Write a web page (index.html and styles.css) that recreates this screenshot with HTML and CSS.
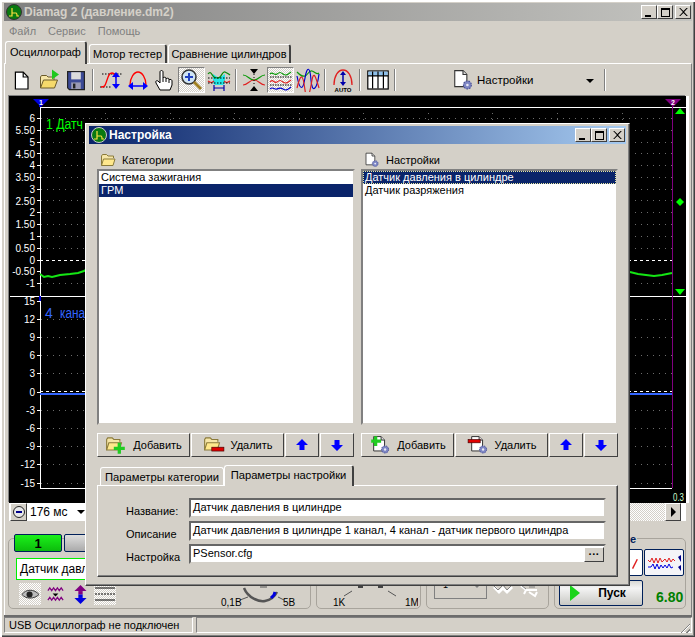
FILE: index.html
```html
<!DOCTYPE html>
<html>
<head>
    <title>Diamag 2 (давление.dm2)</title>
    <link rel="stylesheet" href="styles.css">
</head>
<body>
<svg class="defs" width="0" height="0">
    <symbol id="folder" viewBox="0 0 16 16">
        <path d="M1.5 13.5V4l1-1.5h4L8 4h5.5v2" fill="#f6e6a8" stroke="#8a7a3a"/>
        <path d="M1.5 13.5L3.5 7h11.5l-2 6.500z" fill="#ffe88c" stroke="#8a7a3a"/>
    </symbol>
    <symbol id="gearpage" viewBox="0 0 20 20">
        <path d="M2.500 1.500H10l3.500 3.500V16H2.500z" fill="#fff" stroke="#333"/>
        <path d="M10 1.500V5h3.500" fill="#ddd" stroke="#333"/>
        <circle cx="14" cy="14.500" r="3.600" fill="#7d86c4" stroke="#4c5296" stroke-width="1" stroke-dasharray="1.500 1"/>
        <circle cx="14" cy="14.500" r="1.200" fill="#e8e8f4"/>
    </symbol>
    <symbol id="arrowup" viewBox="0 0 14 14">
        <path d="M7 1l6 6H9.500v5h-5V7H1z" fill="#0000ff"/>
    </symbol>
    <symbol id="arrowdown" viewBox="0 0 14 14">
        <path d="M7 13l6-6H9.500V2h-5v5H1z" fill="#0000ff"/>
    </symbol>
</svg>

<div class="window">
    <div class="titlebar">
        <svg class="appicon" viewBox="0 0 16 16"><circle cx="8" cy="8" r="7.500" fill="#0a7a10" stroke="#333" stroke-width="1"/><path d="M3 12h3V4m0 5h4c1 0 1 1 1 3h2" fill="none" stroke="#ffe040" stroke-width="1.200"/></svg>
        <span class="title-text">Diamag 2 (давление.dm2)</span>
        <div class="capbtns">
            <span class="capbtn"><i class="cap-min"></i></span>
            <span class="capbtn"><i class="cap-max"></i></span>
            <span class="capbtn gap"><svg viewBox="0 0 10 9"><path d="M1 0l3.500 3.500L8 0h1.500L5.300 4.500 9.500 9H8L4.500 5.500 1 9H-.3l4.200-4.500L-.3 0z" transform="translate(.4 0)"/></svg></span>
        </div>
    </div>
    <div class="menubar">
        <span>Файл</span><span>Сервис</span><span>Помощь</span>
    </div>
    <div class="tabs">
        <span class="tab active">Осциллограф</span>
        <span class="tab motor">Мотор тестер</span>
        <span class="tab cmp">Сравнение цилиндров</span>
    </div>

    <div class="page">
        <div class="toolbar">
            <span class="tool"><svg viewBox="0 0 20 20"><path d="M4.500 3.500H11l4 4v10H4.500z" fill="#fff" stroke="#000"/><path d="M11 3.500v4h4" fill="none" stroke="#000"/></svg></span>
            <span class="tool"><svg viewBox="0 0 24 24"><path d="M3.500 20V9l1-1.500h5L11 9h6v3" fill="#f6e6a8" stroke="#6a5a2a"/><path d="M3.500 20l3-8h14l-3 8z" fill="#f5d96b" stroke="#6a5a2a"/><path d="M15 1.500l7 5-7 5z" fill="#1ec81e"/></svg></span>
            <span class="tool"><svg viewBox="0 0 20 20"><path d="M3 3h14v15H4.500L3 16.500z" fill="#3c4a96" stroke="#222"/><rect x="6" y="3.500" width="8" height="6" fill="#dcdcdc"/><rect x="6" y="12" width="8" height="5.500" fill="#9a9ab4"/><rect x="7.500" y="13" width="2" height="4" fill="#222"/></svg></span>
            <span class="sep"></span>
            <span class="tool"><svg viewBox="0 0 24 24"><path d="M3 6h20M1 19h11" stroke="#000" stroke-dasharray="1.500 1.500"/><path d="M2 19c4 0 4-1 6-7s3-7 5-7 3 2 4 5" fill="none" stroke="#f00" stroke-width="1.300"/><path d="M17 7v10" stroke="#00f" stroke-width="1.500"/><path d="M17 4l4 5h-8zM17 21l4-5h-8z" fill="#00f"/></svg></span>
            <span class="tool"><svg viewBox="0 0 24 24"><path d="M4 17c0-7 4-13 8-13s8 6 8 13" fill="none" stroke="#f00" stroke-width="1.300"/><path d="M5 18h14" stroke="#00f" stroke-width="1.500"/><path d="M2 18l5-4v8zM22 18l-5-4v8z" fill="#00f"/></svg></span>
            <span class="tool"><svg viewBox="0 0 24 24"><path d="M7 22l-4-7c-1-2 1-3 2-2l2 2V4c0-2 3-2 3 0v6c0-1 3-1 3 0v1c0-1 3-1 3 0v1c0-1 3-1 3 1v4l-2 5z" fill="#fff" stroke="#000"/><path d="M10 10v4M13 11v3M16 12v3" stroke="#000"/></svg></span>
            <span class="tool on"><svg viewBox="0 0 24 24"><circle cx="9" cy="9" r="7" fill="#cfe4f4" stroke="#333" stroke-width="1.500"/><path d="M5 9h8M9 5v8" stroke="#2040c0" stroke-width="2"/><path d="M14 14l7 7" stroke="#a08020" stroke-width="3"/></svg></span>
            <span class="tool"><svg viewBox="0 0 24 24"><path d="M6 6l3 2 3 2 3-2 3-2v9l-2 2H8l-2-2z" fill="#22e8e8"/><path d="M1 6c3-4 4 2 6 3s4 2 6 0 3-6 5-5 4 2 5 3" fill="none" stroke="#0a8a0a" stroke-width="1.200"/><path d="M1 13c3 2 4 2 6 0m10 0c2 2 3 2 6 0" fill="none" stroke="#e02020" stroke-width="1.200"/><path d="M1 10h22M1 15h22" stroke="#000" stroke-dasharray="1.500 1.500"/><path d="M7 20h10M7 17v6M17 17v6" stroke="#00a" stroke-width="1.200"/></svg></span>
            <span class="sep"></span>
            <span class="tool"><svg viewBox="0 0 24 24"><path d="M1 7c5 0 6 5 11 5s6-5 11-5" fill="none" stroke="#0a9a0a" stroke-width="1.200"/><path d="M1 17c5 0 6-5 11-5s6 5 11 5" fill="none" stroke="#e02020" stroke-width="1.200"/><path d="M8 1h8l-4 5zM8 23h8l-4-5z"/><path d="M12 6v12" stroke="#000" stroke-dasharray="1 2"/></svg></span>
            <span class="tool on"><svg viewBox="0 0 24 24"><path d="M1 6c3-3 4 2 7 0s3-2 6 0 4 1 8-2" fill="none" stroke="#0a9a0a" stroke-width="1.200"/><path d="M1 14c3-4 4 2 7 0s3-2 6 0 4 1 8-2" fill="none" stroke="#e02020" stroke-width="1.200"/><path d="M1 21c3-3 4 1 7 0s3-2 6 0 4 1 8-2" fill="none" stroke="#00c" stroke-width="1.200"/><path d="M1 9h22M1 17h22" stroke="#000" stroke-dasharray="1.500 1"/></svg></span>
            <span class="tool"><svg viewBox="0 0 24 24"><path d="M1 4c3 3 5 5 8 4s4-6 7-5 5 4 7 2" fill="none" stroke="#0a9a0a" stroke-width="1.200"/><path d="M1 8c3 16 6 14 8 2s5-12 6 2 6 10 8-6" fill="none" stroke="#00c" stroke-width="1.200"/><path d="M1 20c4-16 6-14 8 2s5 2 7-10 5 2 7 8" fill="none" stroke="#e02020" stroke-width="1.200"/></svg></span>
            <span class="sep"></span>
            <span class="tool"><svg viewBox="0 0 24 24"><path d="M3 17c0-9 4-15 9-15s9 6 9 15" fill="none" stroke="#e02020" stroke-width="1.300"/><path d="M12 6v9" stroke="#00a" stroke-width="1.500"/><path d="M12 3l3 4H9zM12 18l3-4H9z" fill="#00a"/><text class="autotxt" x="12" y="23.500">AUTO</text></svg></span>
            <span class="sep"></span>
            <span class="tool"><svg viewBox="0 0 20 20"><rect x="1.500" y="2.500" width="17" height="15" fill="#fff" stroke="#000"/><rect x="2" y="3" width="16" height="3.500" fill="#8ec0ea"/><path d="M1.500 6.500h17M5.500 3v14M10 3v14M14.500 3v14" stroke="#000"/></svg></span>
            <span class="sep"></span>
            <div class="tool-drop">
                <svg class="tool-drop-icon" viewBox="0 0 20 20"><use href="#gearpage"/></svg>
                <span>Настройки</span>
                <i class="drop-arrow"></i>
            </div>
            <span class="sep"></span>
        </div>

        <svg class="scope" viewBox="0 0 677 407" width="677" height="407">
            <g transform="translate(-9 -96)" shape-rendering="crispEdges">
                <rect x="9" y="96" width="677" height="407" fill="#000"/>
                <path class="grid" d="M41 118H672M41 130H672M41 142H672M41 153H672M41 165H672M41 177H672M41 189H672M41 200H672M41 212H672M41 224H672M41 236H672M41 248H672M41 283H672"/>
                <path class="grid" d="M41 319H672M41 337H672M41 355H672M41 373H672M41 410H672M41 428H672M41 446H672M41 464H672M41 483H672"/>
                <path class="grid" d="M105 107V288M170 107V288M234 107V288M299 107V288M363 107V288M428 107V288M492 107V288M557 107V288M622 107V288"/>
                <path class="grid" d="M622 300V488"/>
                <path d="M40 107H686M10 296H686M40 488H672" stroke="#fff" fill="none"/>
                <path d="M40 107V296M40 301V488" stroke="#fff" fill="none"/>
                <path d="M40 100V107M40 296V301" stroke="#0000e0" stroke-width="2" fill="none"/>
                <path d="M37 118H40M37 130H40M37 142H40M37 153H40M37 165H40M37 177H40M37 189H40M37 200H40M37 212H40M37 224H40M37 236H40M37 248H40M37 260H40M37 271H40M37 283H40M37 301H40M37 319H40M37 337H40M37 355H40M37 373H40M37 392H40M37 410H40M37 428H40M37 446H40M37 464H40M37 483H40" stroke="#fff"/>
                <path class="zero" d="M40 260H672M40 391H672"/>
                <path d="M672 106V488" stroke="#800080" fill="none"/>
            </g>
            <g transform="translate(-9 -96)">
                <path d="M33 99H49L41 107z" fill="#0000e0"/>
                <path d="M665 99H681L673 107z" fill="#800080"/>
                <text class="cursor-num" x="41" y="105">1</text>
                <text class="cursor-num" x="673" y="105">2</text>
                <path d="M680 108l5 6h-10z" fill="#0f0"/>
                <path d="M680 198l4 4-4 4-4-4z" fill="#0f0"/>
                <path d="M680 295l5-6h-10z" fill="#0f0"/>
                <path d="M40 274l4 3 4-1 4 1 8-2 10-1 8-1 6-2 4-2 6-3" class="trace-green"/>
                <path d="M630 272l8 2 8 1 8 1 8-1 10-2" class="trace-green"/>
                <path d="M40 394H672" stroke="#3366ff" stroke-width="2" fill="none"/>
                <text class="ch-green" x="46" y="129" textLength="37" lengthAdjust="spacingAndGlyphs">1 Датч</text>
                <text class="ch-blue" x="45" y="318">4</text>
                <text class="ch-blue" x="60" y="318" textLength="25" lengthAdjust="spacingAndGlyphs">кана</text>
                <g class="ylab">
                    <text x="35" y="122">6</text><text x="35" y="134">5.50</text><text x="35" y="146">5</text><text x="35" y="158">4.50</text><text x="35" y="169">4</text><text x="35" y="181">3.50</text><text x="35" y="193">3</text><text x="35" y="205">2.50</text><text x="35" y="216">2</text><text x="35" y="228">1.50</text><text x="35" y="240">1</text><text x="35" y="252">0.50</text><text x="35" y="264">0</text><text x="35" y="275">-0.50</text><text x="35" y="287">-1</text>
                    <text x="35" y="305">15</text><text x="35" y="323">12</text><text x="35" y="341">9</text><text x="35" y="359">6</text><text x="35" y="377">3</text><text x="35" y="396">0</text><text x="35" y="414">-3</text><text x="35" y="432">-6</text><text x="35" y="450">-9</text><text x="35" y="468">-12</text><text x="35" y="487">-15</text>
                </g>
                <text class="xlab" x="673" y="501" textLength="11" lengthAdjust="spacingAndGlyphs">0.3</text>
            </g>
        </svg>

        <div class="hscroll">
            <span class="zoom-btn"><svg viewBox="0 0 14 14"><circle cx="7" cy="7" r="5.500" fill="#e8e8e8" stroke="#222"/><path d="M4 7h6" stroke="#00008b" stroke-width="2"/></svg></span>
            <div class="time-combo"><span>176 мс</span><i class="drop-arrow"></i></div>
            <div class="scroll-track"></div>
            <span class="scroll-btn"><i></i></span>
        </div>

        <div class="controls">
            <div class="ctl ctl-channel">
                <div class="ch-main">
                    <div class="ch-btns">
                        <span class="ch-btn green">1</span>
                        <span class="ch-btn grey">2</span>
                    </div>
                    <div class="sensor-field">Датчик давления</div>
                    <div class="ch-icons">
                        <span class="ch-icon on"><svg viewBox="0 0 20 12"><path d="M1 6c4-6 13-6 18 0-5 5-14 5-18 0z" fill="#bbb" stroke="#333"/><circle cx="9" cy="6" r="3.200" fill="#222"/></svg></span>
                        <span class="ch-icon"><svg viewBox="0 0 18 20"><path d="M1 6l2-3 2 3 2-3 2 3 2-3 2 3 2-3 2 3M1 16l2-3 2 3 2-3 2 3 2-3 2 3 2-3 2 3" fill="none" stroke="#800080" stroke-width="1.300"/><path d="M6 9h6l-3 3z"/></svg></span>
                        <span class="ch-icon"><svg viewBox="0 0 18 22"><path d="M9 0l7 7H2z" fill="#800080"/><path d="M9 22l7-7H2z" fill="#0000e0"/><path d="M6.500 7h5v4h-5z" fill="#800080"/><path d="M6.500 11h5v4h-5z" fill="#0000e0"/></svg></span>
                        <span class="ch-icon on lines"><svg viewBox="0 0 22 18"><path d="M1 3h20M1 15h20" stroke="#000"/><path d="M1 9h20" stroke="#000" stroke-dasharray="2 1"/></svg></span>
                    </div>
                </div>
                <svg class="gauge" viewBox="0 0 84 24">
                    <path d="M29 4c4 10 15 14 21 13s10-5 12-9" fill="none" stroke="#555" stroke-width="2.500"/>
                    <path d="M56 14l3-3 1-3" fill="none" stroke="#0000e0" stroke-width="3"/>
                    <path d="M25 16l8-3M63 13l6 3M45 3h7" stroke="#555"/>
                    <text class="gauge-txt" x="6" y="22">0,1В</text>
                    <text class="gauge-txt" x="68" y="22">5В</text>
                </svg>
            </div>
            <div class="ctl ctl-gauge2">
                <svg class="gauge" viewBox="0 0 100 24">
                    <path d="M26 12l8-5M70 7l8 5" stroke="#555"/>
                    <path d="M40 3h5M60 3h5" stroke="#444" stroke-width="2"/>
                    <text class="gauge-txt" x="15" y="22">1K</text>
                    <text class="gauge-txt" x="87" y="22">1M</text>
                </svg>
            </div>
            <div class="ctl ctl-trigger">
                <div class="trig-row">
                    <div class="trig-combo">1<i class="drop-arrow grey"></i></div>
                    <svg class="trig-icon" viewBox="0 0 20 20"><path d="M1 8l5 5 4-4 4 4 5-5" fill="none" stroke="#fff" stroke-width="3"/><path d="M1 7l4 4 5-5 4 5 4-4" fill="none" stroke="#808080"/></svg>
                    <svg class="trig-icon" viewBox="0 0 20 20"><path d="M2 7l5 4h11M7 11l-2 4M10 13l6 4 2-4" fill="none" stroke="#fff" stroke-width="2"/><path d="M2 6l5 4M10 8h6" fill="none" stroke="#808080"/></svg>
                </div>
            </div>
            <div class="ctl ctl-run">
                <span class="ctl-title">е</span>
                <div class="run-left">
                    <span class="mode-btn"><svg viewBox="0 0 36 24"><path d="M26 18l5-10" stroke="#e02020" stroke-width="1.500"/></svg></span>
                    <span class="run-btn"><i class="play"></i><b>Пуск</b></span>
                </div>
                <div class="run-right">
                    <span class="mode-btn wave"><svg viewBox="0 0 36 22"><path d="M2 8l2 2 2-4 2 5 2-5 2 5 2-5 2 4 3-3 2 3 2-4 2 4 2-3 2 2" fill="none" stroke="#e02020"/><path d="M32 5l3-2v7z" fill="#00008b"/><path d="M2 15h3l2-3 2 5 2-5 2 5 2-4 2 3 2-3 2 3 2-4 2 4 2-1" fill="none" stroke="#0000e0"/><path d="M32 15l3-2v6z" fill="#00008b"/></svg></span>
                    <span class="version">6.80</span>
                </div>
            </div>
        </div>
    </div>

    <div class="statusbar">
        <span class="pane first">USB Осциллограф не подключен</span>
        <span class="pane rest"></span>
        <i class="grip"></i>
    </div>

    <div class="dialog">
        <div class="titlebar dlg-title">
            <svg class="appicon" viewBox="0 0 16 16"><circle cx="8" cy="8" r="7.500" fill="#0a7a10" stroke="#ccc" stroke-width="1"/><path d="M3 12h3V4m0 5h4c1 0 1 1 1 3h2" fill="none" stroke="#ffe040" stroke-width="1.200"/></svg>
            <span class="title-text">Настройка</span>
            <div class="capbtns">
                <span class="capbtn"><i class="cap-min"></i></span>
                <span class="capbtn"><i class="cap-max"></i></span>
                <span class="capbtn gap"><svg viewBox="0 0 10 9"><path d="M1 0l3.500 3.500L8 0h1.500L5.300 4.500 9.500 9H8L4.500 5.500 1 9H-.3l4.200-4.500L-.3 0z" transform="translate(.4 0)"/></svg></span>
            </div>
        </div>

        <div class="lists">
            <div class="list-col">
                <div class="list-head"><svg viewBox="0 0 16 16"><use href="#folder"/></svg>Категории</div>
                <div class="listbox">
                    <div class="item">Система зажигания</div>
                    <div class="item sel">ГРМ</div>
                </div>
                <div class="btnbar">
                    <span class="btn wide"><svg viewBox="0 0 20 18"><use href="#folder" width="16" height="16"/><path d="M13 7v10M8 12h10" stroke="#22cc22" stroke-width="3"/></svg>Добавить</span>
                    <span class="btn wide"><svg viewBox="0 0 20 18"><use href="#folder" width="16" height="16"/><rect x="8" y="11" width="11" height="3.500" fill="#e00000" stroke="#400" stroke-width=".6"/></svg>Удалить</span>
                    <span class="btn arrow"><svg viewBox="0 0 14 14"><use href="#arrowup"/></svg></span>
                    <span class="btn arrow"><svg viewBox="0 0 14 14"><use href="#arrowdown"/></svg></span>
                </div>
            </div>
            <div class="list-col">
                <div class="list-head"><svg viewBox="0 0 20 20"><use href="#gearpage"/></svg>Настройки</div>
                <div class="listbox">
                    <div class="item sel focus">Датчик давления в цилиндре</div>
                    <div class="item">Датчик разряжения</div>
                </div>
                <div class="btnbar">
                    <span class="btn wide"><svg viewBox="0 0 20 18"><use href="#gearpage" width="18" height="18" x="2"/><path d="M6 1v9M2 5.500h9" stroke="#22cc22" stroke-width="3"/></svg>Добавить</span>
                    <span class="btn wide"><svg viewBox="0 0 20 18"><use href="#gearpage" width="18" height="18" x="2"/><rect x="1" y="4" width="11" height="3" fill="#e00000" stroke="#400" stroke-width=".6"/></svg>Удалить</span>
                    <span class="btn arrow"><svg viewBox="0 0 14 14"><use href="#arrowup"/></svg></span>
                    <span class="btn arrow"><svg viewBox="0 0 14 14"><use href="#arrowdown"/></svg></span>
                </div>
            </div>
        </div>

        <div class="dlg-tabs">
            <span class="dtab">Параметры категории</span>
            <span class="dtab active">Параметры настройки</span>
        </div>
        <div class="dlg-panel">
            <div class="form-row"><label>Название:</label><div class="edit">Датчик давления в цилиндре</div></div>
            <div class="form-row"><label>Описание</label><div class="edit">Датчик давления в цилиндре 1 канал, 4 канал - датчик первого цилиндра</div></div>
            <div class="form-row"><label>Настройка</label><div class="edit browse">PSensor.cfg<span class="dots">···</span></div></div>
        </div>
    </div>
</div>
</body>
</html>
```

FILE: styles.css
```css
* { box-sizing: border-box; }
html, body { margin: 0; padding: 0; }
body { font-family: "Liberation Sans", Tahoma, sans-serif; font-size: 11px; color: #000; background: #d4d0c8; }
.defs { position: absolute; }

.window {
    position: relative;
    width: 695px;
    height: 637px;
    padding: 3px 3px 0 4px;
    display: flex;
    flex-direction: column;
    background: #d4d0c8;
    overflow: hidden;
    box-shadow: inset 2px 2px 0 #fff, inset -1px -1px 0 #404040, inset -2px -2px 0 #808080;
}

/* заголовок */
.titlebar {
    height: 18px;
    flex: none;
    display: flex;
    align-items: center;
    padding: 0 1px 0 2px;
    background: linear-gradient(90deg, #808080, #c4c4c0);
}
.appicon { width: 16px; height: 16px; margin-right: 2px; flex: none; }
.title-text { font-weight: bold; font-size: 12px; color: #d4d0c8; white-space: nowrap; }
.capbtns { margin-left: auto; display: flex; }
.capbtn {
    width: 16px; height: 14px;
    background: #d4d0c8;
    border: 1px solid;
    border-color: #fff #404040 #404040 #fff;
    display: flex;
    align-items: center;
    justify-content: center;
}
.capbtn.gap { margin-left: 2px; }
.capbtn svg { width: 9px; height: 8px; }
.cap-min { width: 6px; height: 2px; background: #000; margin-top: 7px; margin-right: 2px; }
.cap-max { width: 9px; height: 9px; border: 1px solid #000; border-top-width: 2px; }

/* меню */
.menubar { height: 20px; flex: none; display: flex; align-items: center; gap: 12px; padding-left: 5px; color: #808080; }

/* вкладки */
.tabs { height: 22px; flex: none; display: flex; align-items: flex-end; padding-left: 1px; position: relative; z-index: 1; }
.tab {
    height: 19px;
    display: flex;
    align-items: center;
    justify-content: center;
    background: #d4d0c8;
    border: 1px solid;
    border-width: 1px 2px 0 1px;
    border-color: #fff #404040 #fff #fff;
    border-radius: 3px 3px 0 0;
}
.tab.active { width: 82px; height: 23px; padding-bottom: 3px; margin-bottom: -1px; margin-right: 2px; }
.tab.motor { width: 78px; margin-right: 1px; }
.tab.cmp { width: 123px; }

.page {
    flex: none;
    height: 552px;
    border-top: 1px solid #fff;
    border-left: 1px solid #fff;
    border-right: 1px solid #808080;
    padding-left: 3px;
    display: flex;
    flex-direction: column;
}

/* панель инструментов */
.toolbar { height: 32px; flex: none; display: flex; align-items: center; }
.tool { width: 27px; height: 26px; flex: none; display: flex; align-items: center; justify-content: center; }
.tool svg { width: 24px; height: 24px; }
.tool.on {
    border: 1px solid;
    border-color: #808080 #fff #fff #808080;
    background: repeating-conic-gradient(#fff 0 25%, #d4d0c8 0 50%) 0 0 / 2px 2px;
}
.sep { width: 8px; height: 22px; flex: none; position: relative; }
.sep::before { content: ""; position: absolute; left: 3px; top: 0; bottom: 0; width: 1px; background: #808080; box-shadow: 1px 0 0 #fff; }
.autotxt { font: bold 6px "Liberation Sans", sans-serif; text-anchor: middle; }
.tool-drop { width: 202px; flex: none; display: flex; align-items: center; font-size: 11.5px; position: relative; padding-left: 53px; }
.tool-drop-icon { width: 22px; height: 22px; margin-right: 3px; }
.tool-drop .drop-arrow { position: absolute; right: 7px; top: 10px; }
.drop-arrow { width: 0; height: 0; border: 4px solid transparent; border-top: 4px solid #000; border-bottom: 0; display: inline-block; flex: none; }
.drop-arrow.grey { border-top-color: #808080; }

/* осциллограмма */
.scope { display: block; flex: none; margin-left: 1px; box-shadow: -1px -1px 0 #808080, 3px 0 0 #fff; }
.grid { stroke: #6c6c6c; stroke-dasharray: 1 5; fill: none; }
.zero { stroke: #fff; stroke-dasharray: 3 3; fill: none; }
.trace-green { fill: none; stroke: #14e614; stroke-width: 2; }
.ch-green { font: 14px "Liberation Sans", sans-serif; fill: #00ff00; }
.ch-blue { font: 14px "Liberation Sans", sans-serif; fill: #3366ff; }
.ylab text { font: 10px "Liberation Sans", sans-serif; fill: #fff; text-anchor: end; }
.xlab { font: 11px "Liberation Sans", sans-serif; fill: #d0ffd0; }
.cursor-num { font: bold 7px "Liberation Sans", sans-serif; fill: #fff; text-anchor: middle; }

.hscroll { height: 18px; flex: none; display: flex; margin-left: 1px; width: 677px; background: #fff; align-items: stretch; }
.zoom-btn {
    width: 17px; margin-left: 1px; flex: none;
    display: flex; align-items: center; justify-content: center;
    background: #d4d0c8;
    border: 1px solid;
    border-color: #fff #404040 #404040 #fff;
}
.zoom-btn svg { width: 14px; height: 14px; }
.time-combo { width: 60px; flex: none; display: flex; align-items: center; justify-content: space-between; font-size: 12px; padding: 0 2px 0 3px; white-space: nowrap; }
.scroll-track { flex: 1; background: repeating-conic-gradient(#fff 0 25%, #d4d0c8 0 50%) 0 0 / 2px 2px; }
.scroll-btn {
    width: 16px; margin-right: 5px; flex: none;
    display: flex; align-items: center; justify-content: center;
    background: #d4d0c8;
    border: 1px solid;
    border-color: #fff #404040 #404040 #fff;
}
.scroll-btn i { width: 0; height: 0; border: 5px solid transparent; border-left: 5px solid #000; border-right: 0; }

/* нижние группы */
.controls { flex: 1; display: flex; gap: 5px; padding-top: 17px; }
.ctl { position: relative; border: 1px solid #a8a49c; border-radius: 5px; height: 71px; flex: none; }
.ctl-channel { width: 303px; display: flex; }
.ctl-gauge2 { width: 105px; display: flex; }
.ctl-trigger { width: 123px; }
.ctl-run { width: 132px; display: flex; }
.ctl-title { position: absolute; left: 74px; top: -6px; padding: 0 1px; background: #d4d0c8; color: #00205a; font-weight: bold; }
.ch-main { width: 206px; flex: none; }
.ch-btns { display: flex; gap: 2px; margin: -5px 0 0 5px; }
.ch-btn {
    width: 48px; height: 18px;
    border: 1px solid #00205a;
    border-radius: 2px;
    display: flex; align-items: center; justify-content: center;
    font-weight: bold; font-size: 13px;
}
.ch-btn.green { background: linear-gradient(#1bf01b, #0cbc0c); }
.ch-btn.grey { background: linear-gradient(#ddd, #aaa); color: #777; font-weight: normal; }
.sensor-field { width: 190px; height: 22px; margin: 6px 0 0 7px; background: #fff; border: 1px solid #00f000; padding: 3px; font-size: 12px; white-space: nowrap; }
.ch-icons { display: flex; align-items: center; gap: 3px; margin: 3px 0 0 10px; }
.ch-icon { width: 22px; height: 22px; display: flex; align-items: center; justify-content: center; flex: none; }
.ch-icon svg { width: 19px; height: 19px; }
.ch-icon.on { background: repeating-conic-gradient(#fff 0 25%, #d4d0c8 0 50%) 0 0 / 2px 2px; }
.ch-icon.lines svg { width: 22px; height: 18px; }
.gauge { align-self: flex-end; flex: none; width: 84px; height: 24px; }
.ctl-gauge2 .gauge { width: 100px; margin-left: 1px; }
.gauge-txt { font: 10px "Liberation Sans", sans-serif; fill: #000; }

.ctl-trigger { padding: 25px 0 0 7px; }
.trig-row { display: flex; align-items: flex-start; gap: 6px; }
.trig-combo { width: 53px; height: 35px; border: 1px solid #808080; padding: 15px 0 0 8px; font-size: 9px; position: relative; }
.trig-combo .drop-arrow { position: absolute; right: 5px; top: 19px; }
.trig-icon { width: 20px; height: 20px; margin-top: 15px; }

.mode-btn { height: 27px; background: #fff; border: 1px solid #00205a; border-radius: 2px; display: flex; align-items: center; justify-content: center; flex: none; }
.mode-btn svg { width: 36px; height: 24px; }
.run-left { width: 88px; flex: none; padding-left: 2px; display: flex; flex-direction: column; align-items: flex-end; margin-top: 10px; gap: 4px; }
.run-left .mode-btn { width: 36px; }
.run-btn {
    width: 84px; height: 26px;
    flex: none;
    display: flex; align-items: center; justify-content: center;
    position: relative;
    border: 1px solid #00205a;
    border-radius: 2px;
    background: linear-gradient(#d8d8d4, #f4f4f4 30%, #c8c8c4);
    font-size: 12px;
    padding-left: 22px;
}
.play { position: absolute; left: 10px; top: 4px; width: 0; height: 0; border: 8px solid transparent; border-left: 10px solid #1bd41b; border-right: 0; }
.run-right { flex: 1; padding: 10px 0 0 1px; display: flex; flex-direction: column; }
.run-right .wave { width: 40px; background: #f4f4f8; }
.version { font-weight: bold; font-size: 14px; color: #008000; margin: 13px 0 0 12px; }

/* строка состояния */
.statusbar {
    height: 20px;
    flex: none;
    display: flex;
    gap: 3px;
    position: relative;
    border-top: 2px solid #6c6c6c;
}
.pane { display: flex; align-items: center; height: 16px; padding-left: 4px; border: 1px solid; border-color: #808080 #fff #fff #808080; white-space: nowrap; }
.pane.first { width: 189px; }
.pane.rest { flex: 1; }
.grip {
    position: absolute; right: 2px; bottom: 2px; width: 12px; height: 12px;
    background: repeating-linear-gradient(135deg, transparent 0 2px, #808080 2px 3px, #fff 3px 4px);
    clip-path: polygon(100% 0, 100% 100%, 0 100%);
}

/* диалог */
.dialog {
    position: absolute;
    left: 85px;
    top: 123px;
    width: 545px;
    height: 463px;
    padding: 2px 3px 3px;
    background: #d4d0c8;
    border: 1px solid;
    border-color: #fff #404040 #404040 #fff;
    box-shadow: inset -1px -1px 0 #808080;
    display: flex;
    flex-direction: column;
}
.dlg-title { background: linear-gradient(90deg, #0a246a, #a6caf0); }
.dlg-title .title-text { color: #fff; }

.lists { display: flex; gap: 6px; padding: 6px 0 0 8px; flex: none; }
.list-col { width: 258px; }
.list-col + .list-col { width: 257px; }
.list-head { height: 19px; display: flex; align-items: center; gap: 6px; padding-left: 3px; }
.list-head svg { width: 16px; height: 16px; }
.listbox {
    height: 256px;
    background: #fff;
    border: 2px solid;
    border-color: #808080 #d4d0c8 #d4d0c8 #808080;
}
.item { height: 13px; padding-left: 2px; line-height: 13px; white-space: nowrap; }
.item.sel { background: #0a246a; color: #fff; }
.item.focus { outline: 1px dotted #e8e8a0; outline-offset: -1px; }

.btnbar { display: flex; height: 24px; margin-top: 8px; gap: 1px; }
.btn {
    display: flex; align-items: center; justify-content: center; gap: 6px;
    background: #d4d0c8;
    border: 1px solid;
    border-color: #fff #404040 #404040 #fff;
}
.btn.wide { width: 93px; }
.btn.arrow { width: 34px; }
.btn.wide svg { width: 22px; height: 20px; }
.btn.arrow svg { width: 14px; height: 14px; }

.dlg-tabs { display: flex; align-items: flex-end; height: 22px; margin: 6px 0 0 11px; position: relative; z-index: 1; flex: none; }
.dtab {
    height: 18px;
    width: 124px;
    display: flex; align-items: center; justify-content: center;
    border: 1px solid;
    border-width: 1px 1px 0 1px;
    border-color: #fff;
    border-radius: 3px 3px 0 0;
    background: #d4d0c8;
    font-size: 11.2px;
    white-space: nowrap;
}
.dtab.active { height: 21px; width: 130px; margin-bottom: -1px; border-right: 2px solid #404040; padding-bottom: 3px; }
.dlg-panel {
    height: 92px;
    margin-left: 8px;
    width: 521px;
    flex: none;
    padding-top: 12px;
    border: 1px solid;
    border-color: #fff #404040 #404040 #fff;
    box-shadow: inset -1px -1px 0 #808080;
}
.form-row { display: flex; height: 20px; margin-bottom: 3px; align-items: stretch; }
.form-row label { width: 91px; padding: 7px 0 0 28px; }
.edit {
    width: 417px;
    background: #fff;
    border: 2px solid;
    border-color: #666 #d4d0c8 #d4d0c8 #666;
    padding-left: 2px;
    line-height: 15px;
    position: relative;
    white-space: nowrap;
}
.dots {
    position: absolute; right: 0; top: 1px; bottom: 0; width: 20px;
    background: #d4d0c8;
    border: 1px solid;
    border-color: #fff #404040 #404040 #fff;
    font-weight: bold; text-align: center; line-height: 13px;
}
```
